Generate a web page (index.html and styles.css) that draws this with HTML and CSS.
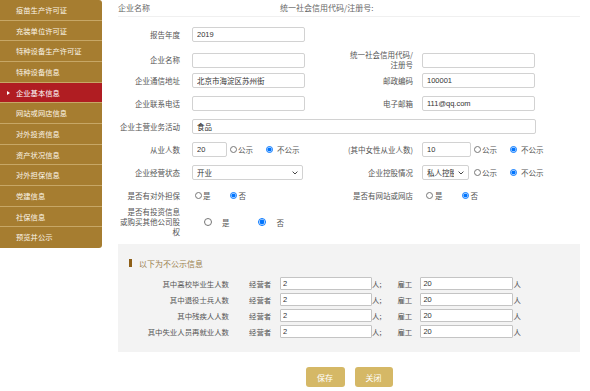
FILE: index.html
```html
<!DOCTYPE html>
<html lang="zh-CN">
<head>
<meta charset="utf-8">
<title>企业基本信息</title>
<link rel="stylesheet" href="styles.css">
</head>
<body>
<div class="page">
  <ul class="sidebar">
    <li class="nav-item">疫苗生产许可证</li>
    <li class="nav-item">充装单位许可证</li>
    <li class="nav-item">特种设备生产许可证</li>
    <li class="nav-item">特种设备信息</li>
    <li class="nav-item active">企业基本信息</li>
    <li class="nav-item">网站或网店信息</li>
    <li class="nav-item">对外投资信息</li>
    <li class="nav-item">资产状况信息</li>
    <li class="nav-item">对外担保信息</li>
    <li class="nav-item">党建信息</li>
    <li class="nav-item">社保信息</li>
    <li class="nav-item last">预览并公示</li>
  </ul>

  <div class="main">
    <div class="topbar">
      <span class="top-name">企业名称</span>
      <span>统一社会信用代码/注册号:</span>
    </div>

    <div class="form">
      <div class="row">
        <span class="lbl">报告年度</span>
        <span class="cell"><input class="inp" type="text" value="2019"></span>
      </div>
      <div class="row">
        <span class="lbl">企业名称</span>
        <span class="cell"><input class="inp" type="text" value=""></span>
        <span class="lbl lbl-r">统一社会信用代码/注册号</span>
        <span class="cell"><input class="inp" type="text" value=""></span>
      </div>
      <div class="row">
        <span class="lbl">企业通信地址</span>
        <span class="cell"><input class="inp" type="text" value="北京市海淀区苏州街"></span>
        <span class="lbl lbl-r">邮政编码</span>
        <span class="cell"><input class="inp" type="text" value="100001"></span>
      </div>
      <div class="row">
        <span class="lbl">企业联系电话</span>
        <span class="cell"><input class="inp" type="text" value=""></span>
        <span class="lbl lbl-r">电子邮箱</span>
        <span class="cell"><input class="inp" type="text" value="111@qq.com"></span>
      </div>
      <div class="row">
        <span class="lbl">企业主营业务活动</span>
        <span class="cell span3"><input class="inp inp-wide" type="text" value="食品"></span>
      </div>
      <div class="row">
        <span class="lbl">从业人数</span>
        <span class="cell">
          <input class="inp inp-num" type="text" value="20">
          <label class="rd rd-a"><input type="radio" name="r1">公示</label>
          <label class="rd rd-b"><input type="radio" name="r1" checked>不公示</label>
        </span>
        <span class="lbl lbl-r nowrap">(其中女性从业人数)</span>
        <span class="cell">
          <input class="inp inp-num2" type="text" value="10">
          <label class="rd rd-a"><input type="radio" name="r2">公示</label>
          <label class="rd rd-b"><input type="radio" name="r2" checked>不公示</label>
        </span>
      </div>
      <div class="row">
        <span class="lbl">企业经营状态</span>
        <span class="cell">
          <span class="selwrap sel-long">
            <select class="sel"><option>开业</option></select>
            <svg class="chev" width="6" height="4" viewBox="0 0 6 4"><path d="M0.6 0.6 L3 3 L5.4 0.6" fill="none" stroke="#333" stroke-width="0.9"/></svg>
          </span>
        </span>
        <span class="lbl lbl-r">企业控股情况</span>
        <span class="cell">
          <span class="selwrap sel-short">
            <select class="sel sel-clip"><option>私人控股</option></select>
            <svg class="chev" width="6" height="4" viewBox="0 0 6 4"><path d="M0.6 0.6 L3 3 L5.4 0.6" fill="none" stroke="#333" stroke-width="0.9"/></svg>
          </span>
          <label class="rd rd-c"><input type="radio" name="r3">公示</label>
          <label class="rd rd-b2"><input type="radio" name="r3" checked>不公示</label>
        </span>
      </div>
      <div class="row">
        <span class="lbl">是否有对外担保</span>
        <span class="cell">
          <label class="rd rd-y"><input type="radio" name="r4">是</label>
          <label class="rd rd-n"><input type="radio" name="r4" checked>否</label>
        </span>
        <span class="lbl lbl-r">是否有网站或网店</span>
        <span class="cell">
          <label class="rd rd-y2"><input type="radio" name="r5">是</label>
          <label class="rd rd-n2"><input type="radio" name="r5" checked>否</label>
        </span>
      </div>
      <div class="row row-tall">
        <span class="lbl">是否有投资信息<br>或购买其他公司股权</span>
        <span class="cell">
          <label class="rd rd-big rd-y3"><input type="radio" name="r6">是</label>
          <label class="rd rd-big rd-n3"><input type="radio" name="r6" checked>否</label>
        </span>
      </div>
    </div>

    <div class="panel">
      <div class="panel-title"><span class="bar"></span>以下为不公示信息</div>
      <div class="prow">
        <span class="plbl">其中高校毕业生人数</span>
        <span class="pk">经营者</span>
        <input class="pinp" type="text" value="2"><span class="unit">人;</span>
        <span class="pk pk2">雇工</span>
        <input class="pinp pinp2" type="text" value="20"><span class="unit">人</span>
      </div>
      <div class="prow">
        <span class="plbl">其中退役士兵人数</span>
        <span class="pk">经营者</span>
        <input class="pinp" type="text" value="2"><span class="unit">人;</span>
        <span class="pk pk2">雇工</span>
        <input class="pinp pinp2" type="text" value="20"><span class="unit">人</span>
      </div>
      <div class="prow">
        <span class="plbl">其中残疾人人数</span>
        <span class="pk">经营者</span>
        <input class="pinp" type="text" value="2"><span class="unit">人;</span>
        <span class="pk pk2">雇工</span>
        <input class="pinp pinp2" type="text" value="20"><span class="unit">人</span>
      </div>
      <div class="prow">
        <span class="plbl">其中失业人员再就业人数</span>
        <span class="pk">经营者</span>
        <input class="pinp" type="text" value="2"><span class="unit">人;</span>
        <span class="pk pk2">雇工</span>
        <input class="pinp pinp2" type="text" value="20"><span class="unit">人</span>
      </div>
    </div>

    <div class="actions">
      <button class="btn btn-save" type="button">保存</button>
      <button class="btn btn-close" type="button">关闭</button>
    </div>
  </div>
</div>
</body>
</html>
```

FILE: styles.css
```css
* { box-sizing: border-box; }

html, body {
  margin: 0;
  padding: 0;
  background: #fff;
}

body {
  font-family: "Noto Sans CJK SC", "Liberation Sans", sans-serif;
  color: #555;
  width: 590px;
  height: 391px;
  overflow: hidden;
}

.page {
  display: flex;
  align-items: flex-start;
}

/* ---------- sidebar ---------- */
.sidebar {
  list-style: none;
  margin: 0;
  padding: 0;
  width: 102px;
  flex: none;
  background: #a67d30;
  border-radius: 0 3px 3px 0;
  overflow: hidden;
}

.nav-item {
  height: 20.67px;
  padding: 3px 0 0 16px;
  font-size: 7.3px;
  line-height: 15px;
  color: #fbf5e8;
  border-bottom: 1px solid #c7a766;
  white-space: nowrap;
}

.nav-item.last { border-bottom: 0; }

.nav-item.active {
  background: #b01d22;
  padding-left: 7px;
  color: #fff;
}

.nav-item.active::before {
  content: "";
  display: inline-block;
  width: 0;
  height: 0;
  border-left: 3px solid #fff;
  border-top: 2.5px solid transparent;
  border-bottom: 2.5px solid transparent;
  margin-right: 6px;
  vertical-align: 0.5px;
}

/* ---------- main ---------- */
.main {
  flex: 1;
  padding: 0 10px 0 16px;
}

.topbar {
  display: flex;
  height: 17px;
  border-bottom: 1px solid #f0f0f0;
  font-size: 8px;
  line-height: 15px;
  color: #666;
}

.top-name { width: 162px; }

.form { padding-top: 10px; }

.row {
  display: grid;
  grid-template-columns: 74px 156px 74px 1fr;
  align-items: center;
  height: 15px;
  margin-bottom: 8px;
}

.row-tall {
  height: 30px;
  margin-top: -4px;
  margin-bottom: 0;
}

.lbl {
  text-align: right;
  padding-right: 12px;
  font-size: 7.5px;
  line-height: 10px;
  color: #555;
}

.lbl-r { padding-right: 9px; }
.nowrap { white-space: nowrap; }

.cell {
  display: flex;
  align-items: center;
  height: 15px;
  font-size: 7.5px;
  color: #555;
}

.span3 { grid-column: 2 / 5; }

.inp {
  width: 113px;
  height: 15px;
  margin: 0;
  padding: 0 4px;
  border: 1px solid #d2d2d2;
  border-radius: 2px;
  font-family: "Liberation Sans", "Noto Sans CJK SC", sans-serif;
  font-size: 7.5px;
  color: #333;
  background: #fff;
  outline: none;
}

.inp-wide { width: 344px; }
.inp-num { width: 35px; }
.inp-num2 { width: 49px; }

.selwrap {
  position: relative;
  display: block;
  height: 15px;
}

.sel {
  -webkit-appearance: none;
  appearance: none;
  display: block;
  width: 100%;
  height: 15px;
  margin: 0;
  padding: 0 10px 0 4px;
  border: 1px solid #d2d2d2;
  border-radius: 2px;
  font-family: "Noto Sans CJK SC", sans-serif;
  font-size: 7.5px;
  color: #333;
  background: #fff;
  outline: none;
  white-space: nowrap;
  overflow: hidden;
}

.sel-clip { padding-right: 14px; }

.chev {
  position: absolute;
  right: 5px;
  top: 6px;
}

.sel-long { width: 111px; }
.sel-short { width: 47px; }

/* ---------- radios ---------- */
.rd {
  display: inline-flex;
  align-items: center;
  white-space: nowrap;
  font-size: 7.5px;
  color: #555;
}

.rd input {
  width: 7px;
  height: 7px;
  margin: 0;
}

.rd-a { margin-left: 3px; }
.rd-a input { margin-right: 1px; }
.rd-b { margin-left: 13px; }
.rd-b input { margin-right: 4px; }

.rd-c { margin-left: 5px; }
.rd-c input { margin-right: 1px; }
.rd-b2 { margin-left: 13px; }
.rd-b2 input { margin-right: 4px; }

.rd-y { margin-left: 3px; }
.rd-y input { margin-right: 1px; }
.rd-n { margin-left: 19px; }
.rd-n input { margin-right: 2px; }

.rd-y2 { margin-left: 4px; }
.rd-y2 input { margin-right: 2px; }
.rd-n2 { margin-left: 19px; }
.rd-n2 input { margin-right: 2px; }

.rd-big input { width: 8px; height: 8px; }
.rd-y3 { margin-left: 12px; }
.rd-y3 input { margin-right: 10px; }
.rd-n3 { margin-left: 28px; }
.rd-n3 input { margin-right: 11px; }

/* ---------- panel ---------- */
.panel {
  margin-top: 7px;
  background: #f3f3f3;
  padding: 14px 0 11px 0;
}

.panel-title {
  display: flex;
  align-items: center;
  height: 10px;
  padding-left: 11px;
  font-size: 8px;
  color: #9a7f4f;
  margin-bottom: 9px;
}

.bar {
  width: 3px;
  height: 8px;
  background: #8e5f17;
  margin-right: 7px;
}

.prow {
  display: flex;
  align-items: center;
  height: 13px;
  margin-bottom: 3px;
  font-size: 7.4px;
  color: #555;
}

.plbl {
  width: 111px;
  text-align: right;
  white-space: nowrap;
}

.pk { margin-left: 20px; width: 23px; }
.pk2 { margin-left: 16px; width: 15px; }

.pinp {
  width: 92px;
  height: 13px;
  margin: 0 0 0 8px;
  padding: 0 2px;
  border: 1px solid #c4c4c4;
  border-radius: 1px;
  background: #fff;
  font-family: "Liberation Sans", sans-serif;
  font-size: 7.5px;
  color: #333;
}

.pinp2 { width: 93px; }

.unit { white-space: nowrap; }

/* ---------- actions ---------- */
.actions {
  display: flex;
  justify-content: center;
  gap: 10px;
  margin-top: 15px;
}

.btn {
  height: 20px;
  margin: 0;
  padding: 0;
  border: 0;
  border-radius: 3px;
  background: #d5b866;
  color: #fff;
  font-family: "Noto Sans CJK SC", sans-serif;
  font-size: 8px;
}

.btn-save { width: 39px; }
.btn-close { width: 38px; }
```
